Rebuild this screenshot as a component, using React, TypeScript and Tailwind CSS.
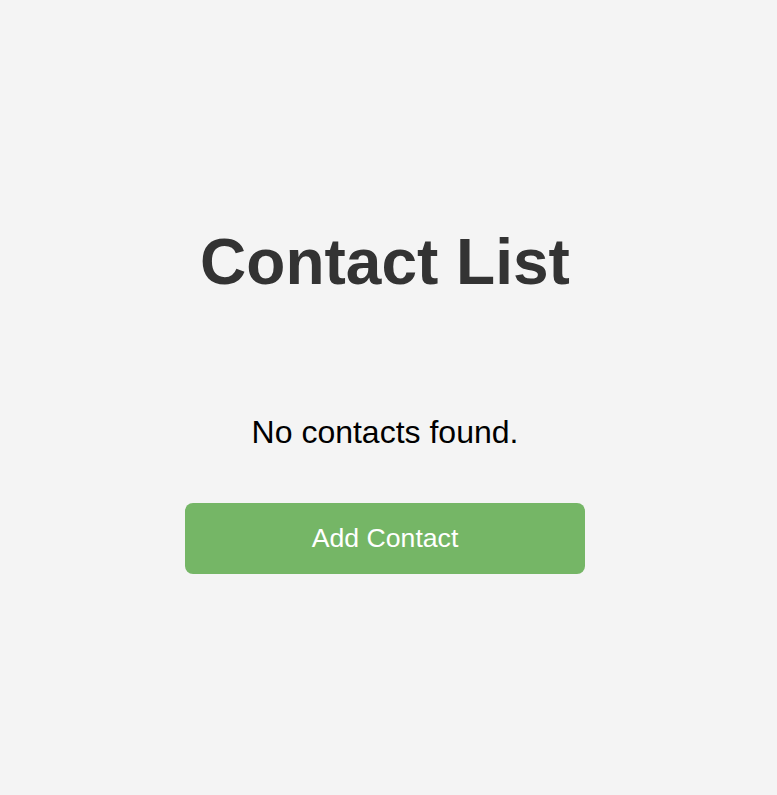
export default function App() {
  return (
    <main className="flex h-screen flex-col items-center bg-[#f4f4f4] pr-[7px] font-['Liberation_Sans',Arial,sans-serif]">
      <h1 className="mt-[225px] text-[64px] leading-[74px] font-bold text-[#333333]">Contact List</h1>
      <p className="mt-[115px] text-[32px] leading-[36px] text-black">No contacts found.</p>
      <button className="mt-[53px] h-[71px] w-[400px] rounded-lg bg-[#75b666] text-[26.67px] leading-[31px] text-white">
        Add Contact
      </button>
    </main>
  );
}
